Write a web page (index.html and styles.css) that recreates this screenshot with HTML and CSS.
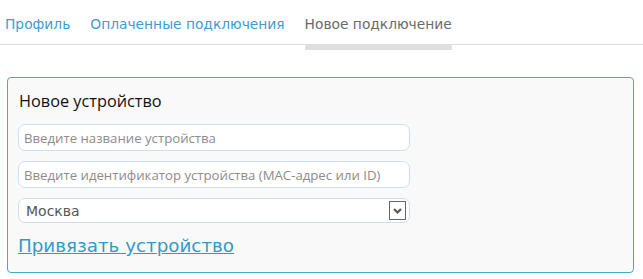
FILE: index.html
```html
<!DOCTYPE html>
<html lang="ru">

<head>
    <meta charset="UTF-8">
    <meta name="viewport" content="width=device-width, initial-scale=1.0">
    <title>Новое подключение</title>
    <link rel="stylesheet" href="styles.css">
</head>

<body>
    <!-- Tabs -->
    <nav class="tabs">
        <a href="#" class="tab">Профиль</a>
        <a href="#" class="tab">Оплаченные подключения</a>
        <a href="#" class="tab active">Новое подключение</a>
    </nav>

    <!-- New device form -->
    <section class="device-box">
        <h2>Новое устройство</h2>
        <form class="device-form">
            <input type="text" class="field" placeholder="Введите название устройства">
            <input type="text" class="field" placeholder="Введите идентификатор устройства (MAC-адрес или ID)">
            <div class="field select">
                <span>Москва</span>
                <span class="select-arrow">
                    <svg width="9" height="6" viewBox="0 0 9 6">
                        <path d="M1 1 L4.5 4.5 L8 1" fill="none" stroke="#555" stroke-width="2"/>
                    </svg>
                </span>
            </div>
            <a href="#" class="bind-link">Привязать устройство</a>
        </form>
    </section>
</body>

</html>
```

FILE: styles.css
```css
/* General Styles */
body {
    margin: 0;
    padding: 0;
    background: #fff;
    font-family: 'DejaVu Sans', Verdana, sans-serif;
}

/* Tabs */
.tabs {
    display: flex;
    gap: 20px;
    padding: 15px 0 0 5px;
    height: 29px;
    border-bottom: 1px solid #dcdcdc;
}

.tab {
    position: relative;
    font-size: 13.8px;
    line-height: 18px;
    color: #3e9bd0;
    text-decoration: none;
}

.tab.active {
    color: #6a6a6a;
}

.tab.active::after {
    content: "";
    position: absolute;
    left: 0;
    right: 0;
    bottom: -6px;
    height: 6px;
    background: #dedede;
    border-radius: 4px 4px 0 0;
}

/* Device box */
.device-box {
    margin: 32px 9px 0 7px;
    height: 174px;
    padding: 10px 10px 10px 10px;
    border: 1px solid #45a9cc;
    border-radius: 4px;
    background: #f9f9f9;
}

.device-box h2 {
    margin: 0 0 0 1px;
    font-family: 'Open Sans', sans-serif;
    font-weight: normal;
    font-size: 16.3px;
    line-height: 26px;
    color: #111;
}

.device-form {
    display: flex;
    flex-direction: column;
    gap: 10px;
    margin-top: 10px;
}

.field {
    box-sizing: border-box;
    width: 392px;
    height: 27px;
    margin: 0;
    padding: 0 5px;
    border: 1px solid #cfe0ea;
    border-radius: 7px;
    background: #fff;
    font-family: 'Open Sans', sans-serif;
    font-size: 13.2px;
    color: #333;
    outline: none;
}

.field::placeholder {
    color: #8c8c8c;
}

.select {
    display: flex;
    align-items: center;
    justify-content: space-between;
    height: 25px;
    padding: 0 3px 0 7px;
    font-family: 'DejaVu Sans', Verdana, sans-serif;
    font-size: 14px;
    color: #555;
}

.select-arrow {
    display: flex;
    align-items: center;
    justify-content: center;
    width: 15px;
    height: 17px;
    border: 1px solid #666;
    background: #fff;
}

.bind-link {
    margin-top: 1px;
    font-size: 18.3px;
    line-height: 24px;
    color: #3399cc;
    text-decoration: underline;
    align-self: flex-start;
}
```
